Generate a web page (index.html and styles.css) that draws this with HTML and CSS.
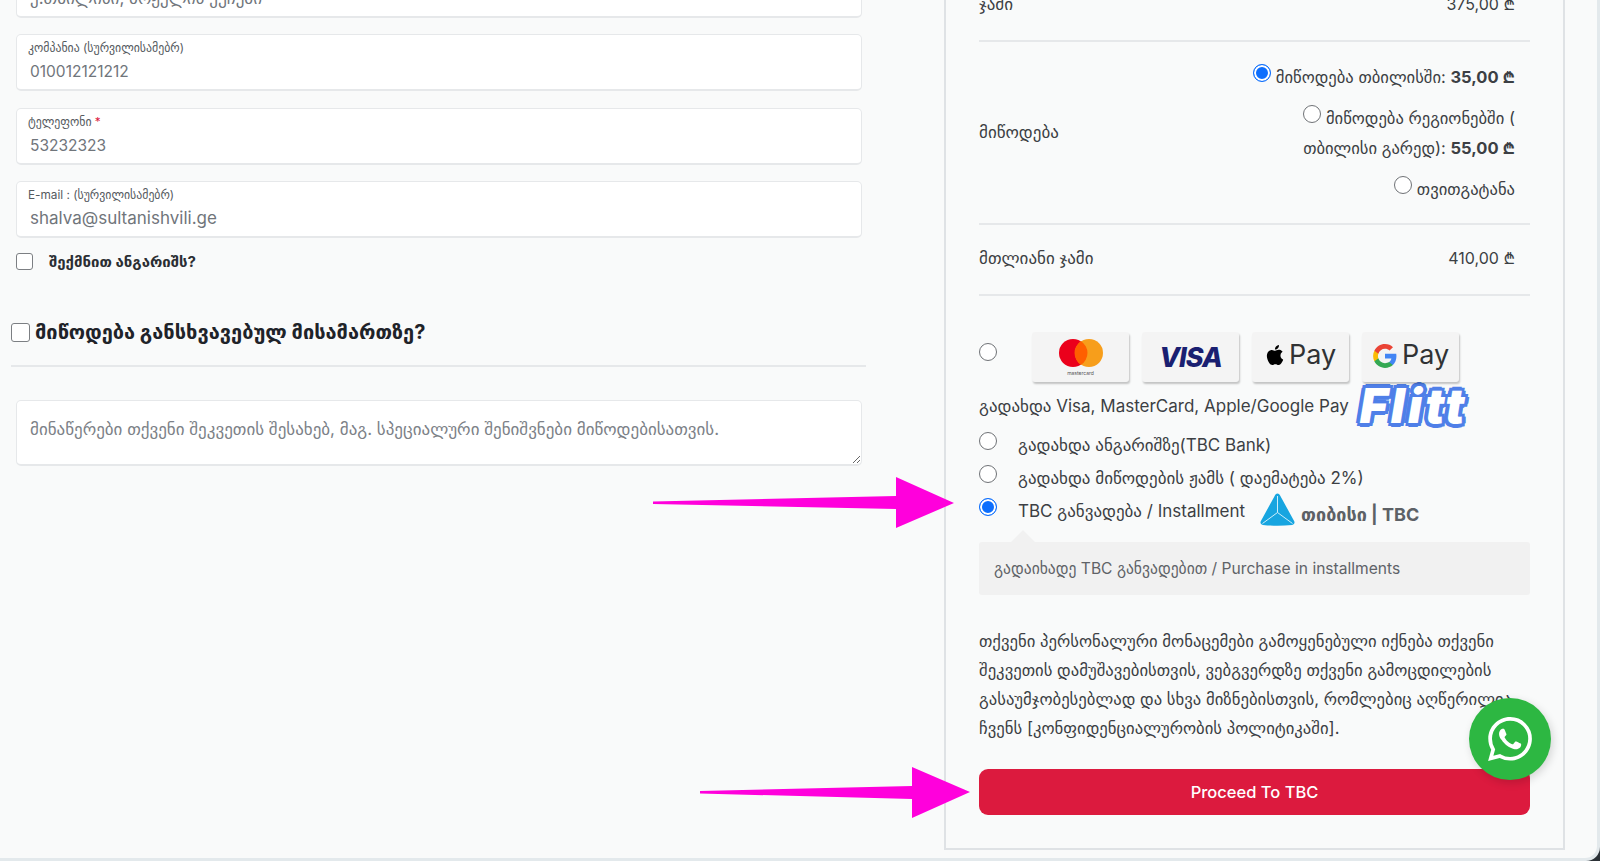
FILE: index.html
```html
<!DOCTYPE html>
<html lang="ka">
<head>
    <meta charset="UTF-8">
    <meta name="viewport" content="width=device-width, initial-scale=1.0">
    <title>Checkout</title>
    <link rel="stylesheet" href="styles.css">
</head>
<body>
    <div class="page">
        <main class="billing">
            <div class="field">
                <label>მისამართი</label>
                <input type="text" value="ქ.თბილისი, ბოჟელის ქუჩები">
            </div>
            <div class="field">
                <label>კომპანია (სურვილისამებრ)</label>
                <input type="text" class="num" value="010012121212">
            </div>
            <div class="field">
                <label>ტელეფონი <span class="required">*</span></label>
                <input type="text" class="num" value="53232323">
            </div>
            <div class="field">
                <label>E-mail : (სურვილისამებრ)</label>
                <input type="text" value="shalva@sultanishvili.ge">
            </div>
            <label class="create-account">
                <input type="checkbox" class="check">
                <span>შექმნით ანგარიშს?</span>
            </label>
            <h3 class="ship-title">
                <input type="checkbox" class="check check-large">
                <span>მიწოდება განსხვავებულ მისამართზე?</span>
            </h3>
            <textarea class="notes" placeholder="მინაწერები თქვენი შეკვეთის შესახებ, მაგ. სპეციალური შენიშვნები მიწოდებისათვის."></textarea>
        </main>

        <aside class="order">
            <div class="row row-subtotal">
                <span>ჯამი</span>
                <span class="amount">375,00 ₾</span>
            </div>
            <div class="row row-shipping">
                <span>მიწოდება</span>
                <ul class="ship-methods">
                    <li><input type="radio" class="radio" name="ship" checked> მიწოდება თბილისში: <strong>35,00 ₾</strong></li>
                    <li><input type="radio" class="radio" name="ship"> მიწოდება რეგიონებში ( თბილისი გარედ): <strong>55,00 ₾</strong></li>
                    <li><input type="radio" class="radio" name="ship"> თვითგატანა</li>
                </ul>
            </div>
            <div class="row row-total">
                <span>მთლიანი ჯამი</span>
                <span class="amount">410,00 ₾</span>
            </div>

            <div class="payment">
                <div class="pay-cards">
                    <input type="radio" class="radio" name="pay">
                    <div class="card-list">
                        <div class="pay-card">
                            <svg class="mc" viewBox="0 0 44 36">
                                <circle cx="14" cy="14" r="14" fill="#eb001b"/>
                                <circle cx="30" cy="14" r="14" fill="#f79e1b"/>
                                <path d="M22 2.2a14 14 0 0 1 0 23.6a14 14 0 0 1 0-23.6z" fill="#ff5f00"/>
                            </svg>
                            <span class="mc-name">mastercard</span>
                        </div>
                        <div class="pay-card"><span class="visa">VISA</span></div>
                        <div class="pay-card">
                            <svg class="apple" viewBox="0 0 24 24"><path d="M12.152 6.896c-.948 0-2.415-1.078-3.96-1.04-2.04.027-3.91 1.183-4.961 3.014-2.117 3.675-.546 9.103 1.519 12.09 1.013 1.454 2.208 3.09 3.792 3.039 1.52-.065 2.09-.987 3.935-.987 1.831 0 2.35.987 3.96.948 1.637-.026 2.676-1.48 3.676-2.948 1.156-1.688 1.636-3.325 1.662-3.415-.039-.013-3.182-1.221-3.22-4.857-.026-3.04 2.48-4.494 2.597-4.559-1.429-2.09-3.623-2.324-4.39-2.376-2-.156-3.675 1.09-4.61 1.09zM15.53 3.83c.843-1.012 1.4-2.427 1.245-3.83-1.207.052-2.662.805-3.532 1.818-.78.896-1.454 2.338-1.273 3.714 1.338.104 2.715-.688 3.559-1.701"/></svg>
                            <span class="pay-word">Pay</span>
                        </div>
                        <div class="pay-card">
                            <svg class="google" viewBox="0 0 24 24">
                                <path fill="#4285f4" d="M22.56 12.25c0-.78-.07-1.53-.2-2.25H12v4.26h5.92c-.26 1.37-1.04 2.53-2.21 3.31v2.77h3.57c2.08-1.92 3.28-4.74 3.28-8.09z"/>
                                <path fill="#34a853" d="M12 23c2.97 0 5.46-.98 7.28-2.66l-3.57-2.77c-.98.66-2.23 1.06-3.71 1.06-2.86 0-5.29-1.93-6.16-4.53H2.18v2.84C3.99 20.53 7.7 23 12 23z"/>
                                <path fill="#fbbc05" d="M5.84 14.09c-.22-.66-.35-1.36-.35-2.09s.13-1.43.35-2.09V7.07H2.18C1.43 8.55 1 10.22 1 12s.43 3.45 1.18 4.93l2.85-2.22.81-.62z"/>
                                <path fill="#ea4335" d="M12 5.38c1.62 0 3.06.56 4.21 1.64l3.15-3.15C17.45 2.09 14.97 1 12 1 7.7 1 3.99 3.47 2.18 7.07l3.66 2.84c.87-2.6 3.3-4.53 6.16-4.53z"/>
                            </svg>
                            <span class="pay-word">Pay</span>
                        </div>
                    </div>
                </div>
                <div class="flitt-line">
                    <span>გადახდა Visa, MasterCard, Apple/Google Pay</span>
                    <span class="flitt">Flitt</span>
                </div>
                <label class="pay-option"><input type="radio" class="radio" name="pay"> <span>გადახდა ანგარიშზე(TBC Bank)</span></label>
                <label class="pay-option"><input type="radio" class="radio" name="pay"> <span>გადახდა მიწოდების ჟამს ( დაემატება 2%)</span></label>
                <label class="pay-option">
                    <input type="radio" class="radio" name="pay" checked>
                    <span>TBC განვადება / Installment</span>
                    <span class="tbc-logo">
                        <svg viewBox="0 0 36 34">
                            <path d="M18 1.500c1.200 0 2 .8 2.600 2L34.600 29c1 2 .2 3.600-2 3.900-9.500 1-19.700 1-29.200 0-2.200-.3-3-1.900-2-3.900L15.400 3.500c.6-1.200 1.400-2 2.600-2z" fill="#17a5e0"/>
                            <path d="M18 4v16.500M18 20.500L3 31.500M18 20.500l15 11" fill="none" stroke="#cdeefa" stroke-width="1"/>
                        </svg>
                        <span>თიბისი | TBC</span>
                    </span>
                </label>
                <div class="pay-box">გადაიხადე TBC განვადებით / Purchase in installments</div>
            </div>

            <p class="privacy">თქვენი პერსონალური მონაცემები გამოყენებული იქნება თქვენი შეკვეთის დამუშავებისთვის, ვებგვერდზე თქვენი გამოცდილების გასაუმჯობესებლად და სხვა მიზნებისთვის, რომლებიც აღწერილია ჩვენს [კონფიდენციალურობის პოლიტიკაში].</p>
            <button class="proceed">Proceed To TBC</button>
        </aside>
    </div>

    <!-- annotations drawn over the screenshot -->
    <svg class="arrow arrow-one" viewBox="0 0 301 51"><path d="M0 24.500L243 19V0L301 26L243 51V32L0 27z"/></svg>
    <svg class="arrow arrow-two" viewBox="0 0 270 51"><path d="M0 24L212 19V0L270 25L212 51V32L0 26.500z"/></svg>

    <a class="whatsapp" href="#">
        <svg viewBox="0 0 24 24"><path d="M17.472 14.382c-.297-.149-1.758-.867-2.03-.967-.273-.099-.471-.148-.67.15-.197.297-.767.966-.94 1.164-.173.199-.347.223-.644.075-.297-.15-1.255-.463-2.39-1.475-.883-.788-1.48-1.761-1.653-2.059-.173-.297-.018-.458.13-.606.134-.133.298-.347.446-.52.149-.174.198-.298.298-.497.099-.198.05-.371-.025-.52-.075-.149-.669-1.612-.916-2.207-.242-.579-.487-.5-.669-.51-.173-.008-.371-.01-.57-.01-.198 0-.52.074-.792.372-.272.297-1.04 1.016-1.04 2.479 0 1.462 1.065 2.875 1.213 3.074.149.198 2.096 3.2 5.077 4.487.709.306 1.262.489 1.694.625.712.227 1.36.195 1.871.118.571-.085 1.758-.719 2.006-1.413.248-.694.248-1.289.173-1.413-.074-.124-.272-.198-.57-.347m-5.421 7.403h-.004a9.87 9.87 0 01-5.031-1.378l-.361-.214-3.741.982.998-3.648-.235-.374a9.86 9.86 0 01-1.51-5.26c.001-5.45 4.436-9.884 9.888-9.884 2.64 0 5.122 1.03 6.988 2.898a9.825 9.825 0 012.893 6.994c-.003 5.45-4.437 9.884-9.885 9.884m8.413-18.297A11.815 11.815 0 0012.05 0C5.495 0 .16 5.335.157 11.892c0 2.096.547 4.142 1.588 5.945L.057 24l6.305-1.654a11.882 11.882 0 005.683 1.448h.005c6.554 0 11.89-5.335 11.893-11.893a11.821 11.821 0 00-3.48-8.413z"/></svg>
    </a>
</body>
</html>
```

FILE: styles.css
```css
:root {
    --bg: #f9fafa;
    --line: #e6e8ea;
    --text: #3c3f44;
    --muted: #70757b;
    --blue: #0d6efd;
}

* {
    margin: 0;
    padding: 0;
    box-sizing: border-box;
}

html {
    height: 861px;
    overflow: hidden;
    background-color: #2b3136;
}

body {
    height: 861px;
    overflow: hidden;
    font-family: 'Inter', 'DejaVu Sans', sans-serif;
    font-size: 17px;
    color: var(--text);
    background-color: #e3e9ec;
    border-bottom-right-radius: 14px;
}

.page {
    display: flex;
    width: 1597px;
    height: 898px;
    margin-top: -40px;
    padding-left: 11px;
    background-color: var(--bg);
    border-bottom-right-radius: 12px;
}

.billing {
    width: 855px;
    padding-top: 0.500px;
}

.field {
    width: 846px;
    height: 57px;
    margin: 0 0 16.500px 5px;
    padding: 5px 13px 0 11px;
    background-color: #fff;
    border: 1px solid var(--line);
    border-bottom-width: 2px;
    border-radius: 5px;
}

.field label {
    display: block;
    margin-bottom: 3px;
    font-size: 11.800px;
    line-height: 16px;
    color: #555a60;
}

.field input {
    width: 100%;
    border: 0;
    outline: 0;
    padding-left: 2px;
    font: 17px/25px 'Inter', 'DejaVu Sans', sans-serif;
    color: var(--muted);
    background: transparent;
}

.field input.num {
    font-size: 15.500px;
}

.required {
    color: #dc1a3e;
}

.check {
    appearance: none;
    display: block;
    flex-shrink: 0;
    width: 17px;
    height: 17px;
    background-color: #fff;
    border: 1px solid #7c7f83;
    border-radius: 3px;
}

.check-large {
    width: 19px;
    height: 19px;
}

.create-account {
    display: flex;
    align-items: center;
    gap: 16px;
    margin: -3px 0 0 5px;
    font-size: 15px;
    font-weight: 700;
    color: #2b2e33;
}

.ship-title {
    display: flex;
    align-items: center;
    gap: 5px;
    width: 855px;
    height: 50px;
    margin-top: 46.500px;
    padding-bottom: 18px;
    font-size: 20px;
    color: #1f2329;
    border-bottom: 2px solid var(--line);
}

.notes {
    display: block;
    width: 846px;
    height: 66px;
    margin: 33px 0 0 5px;
    padding: 17px 13px;
    font: 17px/22px 'Inter', 'DejaVu Sans', sans-serif;
    background-color: #fff;
    border: 1px solid var(--line);
    border-bottom-width: 2px;
    border-radius: 5px;
}

.notes::placeholder {
    color: #7c8187;
}

.order {
    width: 621px;
    height: 890px;
    margin-left: 78px;
    padding: 0 33px;
    border: 2px solid #dfe2e5;
    border-top: 0;
}

.row {
    display: flex;
    justify-content: space-between;
    align-items: center;
    padding-right: 15px;
    border-bottom: 2px solid var(--line);
}

.row-subtotal {
    align-items: flex-start;
    height: 82px;
    padding-top: 34px;
}

.row-shipping {
    height: 183px;
    padding-bottom: 2px;
}

.row-total {
    height: 71px;
    padding-bottom: 3px;
}

.amount {
    font-size: 16px;
}

.ship-methods {
    width: 270px;
    margin-top: 2px;
    list-style: none;
    text-align: right;
    font-size: 16.600px;
    line-height: 30px;
}

.ship-methods li {
    margin-bottom: 11px;
}

.ship-methods li:last-child {
    margin-bottom: 0;
}

.ship-methods strong {
    font-size: 16.500px;
}

.radio {
    appearance: none;
    display: inline-block;
    flex-shrink: 0;
    width: 18px;
    height: 18px;
    background-color: #fff;
    border: 1px solid #6f7276;
    border-radius: 50%;
    vertical-align: 1px;
}

.radio:checked {
    background-color: var(--blue);
    border-color: var(--blue);
    box-shadow: inset 0 0 0 2px #fff;
}

.payment {
    padding-top: 36px;
}

.pay-cards {
    display: flex;
    align-items: flex-start;
    height: 50px;
}

.pay-cards .radio {
    margin-top: 11px;
}

.card-list {
    display: flex;
    gap: 13px;
    margin-left: 35px;
}

.pay-card {
    position: relative;
    display: flex;
    align-items: center;
    justify-content: center;
    gap: 4px;
    width: 97px;
    height: 50px;
    background-color: #f4f4f4;
    border-radius: 3px;
    box-shadow: 1px 2px 2px rgba(0, 0, 0, 0.22);
}

.mc {
    width: 44px;
    height: 36px;
}

.mc-name {
    position: absolute;
    bottom: 6px;
    left: 0;
    right: 0;
    text-align: center;
    font-size: 5px;
    color: #555;
}

.visa {
    font-size: 27px;
    font-weight: 800;
    font-style: italic;
    letter-spacing: -1px;
    color: #1a1f71;
}

.apple {
    width: 20px;
    height: 24px;
    margin-top: -4px;
}

.google {
    width: 26px;
    height: 26px;
    margin-top: -3px;
}

.pay-word {
    margin-top: -5px;
    font-size: 27px;
    color: #303234;
}

.flitt-line {
    display: flex;
    align-items: center;
    height: 46px;
    margin-top: 1px;
    white-space: nowrap;
}

/* round outline, text-stroke gives spiky corners */
.flitt {
    margin-left: 11px;
    font-size: 48px;
    line-height: 46px;
    font-weight: 900;
    font-style: italic;
    letter-spacing: 3px;
    color: #fff;
    text-shadow:
        4px 0 #4f7fe8, -4px 0 #4f7fe8, 0 4px #4f7fe8, 0 -4px #4f7fe8,
        3px 3px #4f7fe8, -3px 3px #4f7fe8, 3px -3px #4f7fe8, -3px -3px #4f7fe8;
}

.pay-option {
    display: flex;
    align-items: center;
    gap: 21px;
    height: 33px;
    margin-top: -1px;
    font-size: 17px;
    white-space: nowrap;
}

.pay-option + .pay-option {
    margin-top: 0;
}

.pay-option .radio {
    margin-top: -8px;
}

.tbc-logo {
    display: flex;
    align-items: center;
    gap: 5px;
    margin: 8px 0 0 -7px;
    font-size: 18px;
    font-weight: 700;
    color: #5d6166;
}

.tbc-logo svg {
    width: 37px;
    height: 34px;
    margin-top: -12px;
}

.pay-box {
    position: relative;
    display: flex;
    align-items: center;
    height: 53px;
    margin-top: 15px;
    padding-left: 15px;
    font-size: 15.600px;
    color: #5f6368;
    background-color: #f1f1f1;
    border-radius: 3px;
}

.pay-box::before {
    content: "";
    position: absolute;
    top: -12px;
    left: 32px;
    border: 12px solid transparent;
    border-top: 0;
    border-bottom-color: #f1f1f1;
}

.privacy {
    margin-top: 32px;
    font-size: 16.700px;
    line-height: 29px;
}

.proceed {
    display: block;
    width: 100%;
    height: 46px;
    margin-top: 26px;
    font: 500 16.500px 'Inter', sans-serif;
    color: #fff;
    background-color: #dc1a3e;
    border: 0;
    border-radius: 9px;
}

.arrow {
    position: absolute;
    fill: #ff00dc;
}

.arrow-one {
    left: 653px;
    top: 477px;
    width: 301px;
    height: 51px;
}

.arrow-two {
    left: 700px;
    top: 767px;
    width: 270px;
    height: 51px;
}

.whatsapp {
    position: absolute;
    left: 1469px;
    top: 698px;
    display: flex;
    align-items: center;
    justify-content: center;
    width: 82px;
    height: 82px;
    background-color: #2db742;
    border-radius: 50%;
    box-shadow: 2px 3px 8px rgba(0, 0, 0, 0.15);
}

.whatsapp svg {
    width: 44px;
    height: 44px;
    fill: #fff;
}
```
